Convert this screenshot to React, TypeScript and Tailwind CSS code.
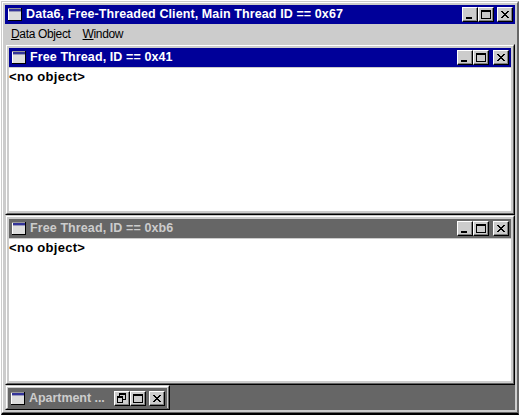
import type { ReactNode } from "react";

type Glyph = "min" | "max" | "restore" | "close";

const shapes: Record<Glyph, ReactNode> = {
  min: <path d="M4 9h6v2H4z" />,
  max: <path fillRule="evenodd" d="M3 2h10v9H3zM4 4v6h8V4z" />,
  restore: <path fillRule="evenodd" d="M5 1h7v7H9v3H3V4h2zM6 3v1h3v3h2V3zM4 6v4h4V6z" />,
  close: <path d="M4 3h2v1h1v1h2V4h1V3h2v1h-1v1h-1v1H9v1h1v1h1v1h1v1h-2V9H9V8H7v1H6v1H4V9h1V8h1V7h1V6H6V5H5V4H4z" />,
};

function Button({ glyph }: { glyph: Glyph }) {
  return (
    <div className="h-[15px] w-4 border-t border-l border-r border-b border-t-white border-l-white border-r-black border-b-black bg-[#ccc] shadow-[inset_-1px_-1px_0_#808080]">
      <svg className="-ml-px block" width="15" height="13" viewBox="0 0 15 13" shapeRendering="crispEdges">
        {shapes[glyph]}
      </svg>
    </div>
  );
}

function AppIcon() {
  return (
    <svg width="14" height="13" viewBox="0 0 14 13" shapeRendering="crispEdges" className="shrink-0">
      <path d="M0 0h14v13H0z" fill="#000" />
      <path d="M0 0h13v12H0z" fill="#fff" />
      <path d="M1 1h12v11H1z" fill="#ddd" />
      <path d="M0 0h13v1H0z" fill="#999" />
      <path d="M1 1h12v2H1z" fill="#339" />
      <path d="M1 3h12v1H1z" fill="#99b" />
    </svg>
  );
}

function TitleBar({ title, tracking, active, gap, buttons }: { title: string; tracking: string; active: boolean; gap: string; buttons: Glyph[] }) {
  return (
    <div className={`flex h-[19px] items-start pr-0.5 pt-0.5 ${active ? "bg-[#000099] text-white" : "bg-[#666] text-[#ccc]"}`}>
      <div className="ml-[3px] mt-px flex items-start">
        <AppIcon />
        <span className={`-mt-px ml-[4px] whitespace-pre text-[12.5px] font-bold leading-[14px] ${tracking}`}>{title}</span>
      </div>
      <div className="ml-auto flex">
        {buttons.map((b) => (
          <div key={b} className={b === "close" ? gap : ""}>
            <Button glyph={b} />
          </div>
        ))}
      </div>
    </div>
  );
}

function ChildWindow({ title, active, height }: { title: string; active: boolean; height: string }) {
  return (
    <div className={`flex border-t border-l border-r border-b border-t-[#ccc] border-l-[#ccc] border-r-black border-b-black ${height}`}>
      <div className="flex flex-1 border-t border-l border-r border-b border-t-white border-l-white border-r-[#666] border-b-[#666]">
        <div className="flex flex-1 flex-col border-2 border-[#ccc]">
          <TitleBar title={title} tracking="tracking-[0.1px]" active={active} gap="ml-1" buttons={["min", "max", "close"]} />
          <div className="flex-1 border-t border-[#ccc] bg-white pt-px text-[13px] font-bold leading-[15px] tracking-[0.3px] text-black">
            {"<no object>"}
          </div>
        </div>
      </div>
    </div>
  );
}

export default function App() {
  return (
    <div className="h-[416px] w-[520px] overflow-hidden bg-white pt-px pl-px font-['Liberation_Sans',sans-serif]">
      <div className="h-[414px] w-[518px] border-t border-l border-r border-b-2 border-t-[#ccc] border-l-[#ccc] border-r-[#666] border-b-black">
        <div className="h-full border-t border-l border-r border-b border-t-white border-l-white border-r-[#666] border-b-[#666]">
          <div className="flex h-full flex-col border-2 border-[#ccc] bg-[#ccc]">
            <TitleBar title="Data6, Free-Threaded Client, Main Thread ID == 0x67" tracking="tracking-[0.1px]" active gap="ml-[3px]" buttons={["min", "max", "close"]} />
            <div className="flex h-5 gap-3 pl-1.5 pt-[3px] text-[12px] leading-[14px] tracking-[-0.35px] text-black">
              <span><u>D</u>ata Object</span>
              <span><u>W</u>indow</span>
            </div>
            <div className="flex-1 bg-[#666]">
              <ChildWindow title="Free Thread, ID == 0x41" active height="h-[171px]" />
              <ChildWindow title="Free Thread, ID == 0xb6" active={false} height="h-[170px]" />
              <div className="h-[25px] w-[165px] border-t border-l border-r border-b border-t-[#ccc] border-l-[#ccc] border-r-black border-b-black">
                <div className="h-full border-t border-l border-r border-b border-t-white border-l-white border-r-[#666] border-b-[#666]">
                  <div className="h-full border border-[#ccc] bg-[#666] pt-px">
                    <TitleBar title="Apartment ..." tracking="tracking-[-0.05px]" active={false} gap="ml-[3px]" buttons={["restore", "max", "close"]} />
                  </div>
                </div>
              </div>
            </div>
          </div>
        </div>
      </div>
    </div>
  );
}
